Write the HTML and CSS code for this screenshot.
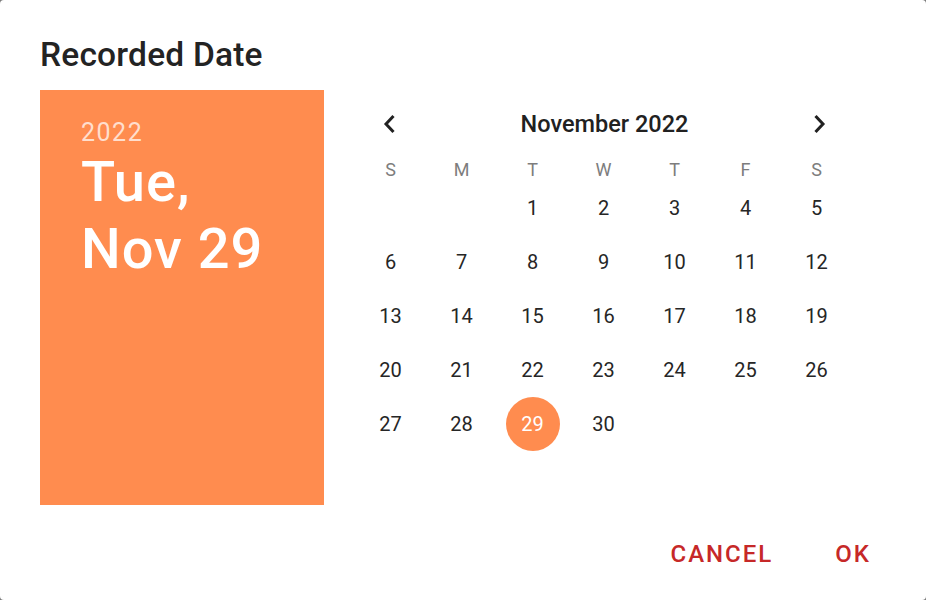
FILE: index.html
```html
<!DOCTYPE html>
<html lang="en">
<head>
<meta charset="utf-8">
<title>Recorded Date</title>
<link rel="stylesheet" href="styles.css">
</head>
<body>
<div class="dialog">
  <h1 class="title">Recorded Date</h1>
  <div class="content">
    <div class="summary">
      <div class="year">2022</div>
      <div class="date">Tue,<br>Nov 29</div>
    </div>
    <div class="calendar">
      <div class="nav">
        <button class="nav-btn" aria-label="Previous month">
          <svg viewBox="0 0 20 20" width="20" height="20"><polyline points="13.5,2 6,10 13.5,18"/></svg>
        </button>
        <div class="month">November 2022</div>
        <button class="nav-btn" aria-label="Next month">
          <svg viewBox="0 0 20 20" width="20" height="20"><polyline points="6.5,2 14,10 6.5,18"/></svg>
        </button>
      </div>
      <div class="weekdays">
        <span>S</span><span>M</span><span>T</span><span>W</span><span>T</span><span>F</span><span>S</span>
      </div>
      <div class="days">
        <span></span><span></span><span>1</span><span>2</span><span>3</span><span>4</span><span>5</span>
        <span>6</span><span>7</span><span>8</span><span>9</span><span>10</span><span>11</span><span>12</span>
        <span>13</span><span>14</span><span>15</span><span>16</span><span>17</span><span>18</span><span>19</span>
        <span>20</span><span>21</span><span>22</span><span>23</span><span>24</span><span>25</span><span>26</span>
        <span>27</span><span>28</span><span class="selected">29</span><span>30</span>
      </div>
    </div>
  </div>
  <div class="actions">
    <button class="action">Cancel</button>
    <button class="action">OK</button>
  </div>
</div>
</body>
</html>
```
FILE: styles.css
```css
* { box-sizing: border-box; }
html, body { margin: 0; padding: 0; }
body {
  width: 926px;
  height: 600px;
  background: #7a7a7a;
  font-family: Roboto, "Liberation Sans", sans-serif;
  overflow: hidden;
}
.dialog {
  width: 926px;
  height: 600px;
  background: #ffffff;
  border-radius: 4px;
  padding: 35px 0 0 40px;
}
.title {
  margin: 0 0 15px 0;
  font-size: 33.5px;
  line-height: 40px;
  font-weight: 500;
  letter-spacing: 0.2px;
  color: #232323;
}
.content {
  display: flex;
  align-items: flex-start;
}
.summary {
  width: 284px;
  height: 415px;
  background: #ff8c4f;
  padding: 27px 0 0 41px;
  color: #ffffff;
}
.year {
  font-size: 25px;
  line-height: 32px;
  letter-spacing: 1.5px;
  color: rgba(255, 255, 255, 0.72);
}
.date {
  font-size: 56px;
  line-height: 67px;
  font-weight: 500;
  letter-spacing: 1px;
}
.calendar {
  width: 497px;
  margin: 10px 0 0 31px;
}
.nav {
  display: flex;
  align-items: center;
  justify-content: space-between;
  height: 48px;
  padding: 0 9px 0 11px;
  margin-bottom: 10px;
}
.nav-btn {
  width: 48px;
  height: 48px;
  border: 0;
  padding: 0;
  background: transparent;
  display: flex;
  align-items: center;
  justify-content: center;
}
.nav-btn svg {
  fill: none;
  stroke: #212121;
  stroke-width: 3;
  stroke-linejoin: miter;
}
.month {
  font-size: 23.5px;
  font-weight: 500;
  color: #212121;
}
.weekdays, .days {
  display: grid;
  grid-template-columns: repeat(7, 71px);
}
.weekdays span {
  height: 23px;
  line-height: 23px;
  text-align: center;
  font-size: 18px;
  color: #7d7d7d;
}
.days span {
  height: 54px;
  line-height: 54px;
  text-align: center;
  font-size: 20px;
  color: #262626;
}
.days .selected {
  justify-self: center;
  width: 54px;
  border-radius: 50%;
  background: #ff8c4f;
  color: #ffffff;
}
.actions {
  display: flex;
  justify-content: flex-end;
  gap: 30px;
  margin-top: 22px;
  padding-right: 39px;
}
.action {
  height: 54px;
  padding: 0 16px;
  border: 0;
  background: transparent;
  font-family: Roboto, "Liberation Sans", sans-serif;
  font-size: 24px;
  font-weight: 500;
  letter-spacing: 2px;
  text-transform: uppercase;
  color: #c62828;
}
```
